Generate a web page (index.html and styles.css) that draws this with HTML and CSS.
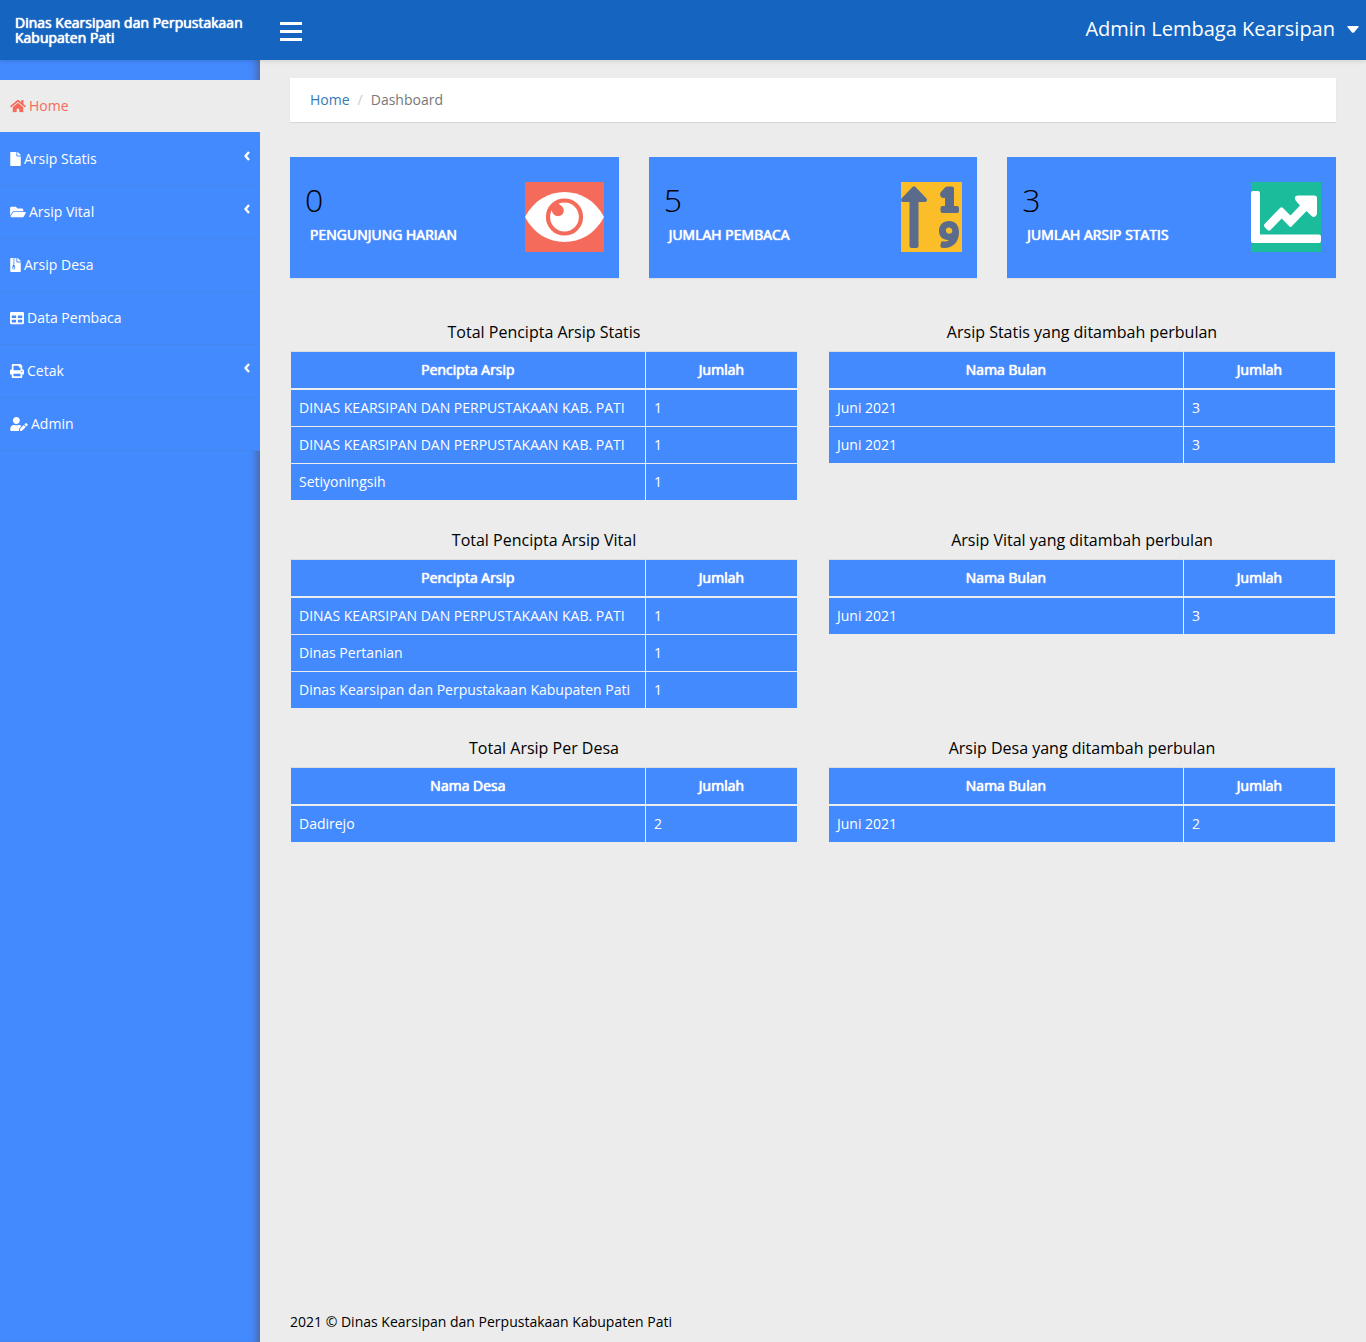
FILE: index.html
```html
<!DOCTYPE html>
<html lang="id">
<head>
<meta charset="utf-8">
<meta name="viewport" content="width=device-width, initial-scale=1">
<title>Dashboard - Dinas Kearsipan dan Perpustakaan Kabupaten Pati</title>
<link rel="stylesheet" href="styles.css">
</head>
<body>
<header class="topbar">
  <a class="brand heavy" href="#">Dinas Kearsipan dan Perpustakaan Kabupaten Pati</a>
  <button class="toggle" type="button" aria-label="Menu"><svg width="22" height="19" viewBox="0 0 22 19"><path d="M0 0h22v3H0zM0 8h22v3H0zM0 16h22v3H0z"/></svg></button>
  <button class="account" type="button">Admin Lembaga Kearsipan <svg width="12" height="7" viewBox="0 0 12 7"><path d="M1 0h10q1 0 .6 1L7 6.400Q6 7.300 5 6.400L.4 1Q0 0 1 0z"/></svg></button>
</header>
<div class="shell">
  <nav class="sidebar">
    <a class="item active" href="#"><svg width="16" height="14" viewBox="0 0 576 512"><path d="M280.37 148.26L96 300.11V464a16 16 0 0 0 16 16l112.06-.29a16 16 0 0 0 15.92-16V368a16 16 0 0 1 16-16h64a16 16 0 0 1 16 16v95.64a16 16 0 0 0 16 16.05L464 480a16 16 0 0 0 16-16V300L295.67 148.26a12.19 12.19 0 0 0-15.3 0zM571.6 251.47L488 182.56V44.05a12 12 0 0 0-12-12h-56a12 12 0 0 0-12 12v72.61L318.47 43a48 48 0 0 0-61 0L4.34 251.47a12 12 0 0 0-1.6 16.9l25.5 31A12 12 0 0 0 45.15 301l235.22-193.74a12.19 12.19 0 0 1 15.3 0L530.9 301a12 12 0 0 0 16.9-1.6l25.5-31a12 12 0 0 0-1.7-16.93z"/></svg>Home</a>
    <a class="item" href="#"><svg width="11" height="14" viewBox="0 0 384 512"><path d="M224 136V0H24C10.700 0 0 10.700 0 24v464c0 13.300 10.700 24 24 24h336c13.300 0 24-10.700 24-24V160H248c-13.200 0-24-10.800-24-24zm160-14.100v6.100H256V0h6.100c6.400 0 12.500 2.500 17 7l97.900 98c4.500 4.500 7 10.600 7 16.900z"/></svg>Arsip Statis<svg class="arrow" width="6" height="10" viewBox="0 0 6 10"><path d="M5 1L1.500 5L5 9"/></svg></a>
    <a class="item" href="#"><svg width="16" height="14" viewBox="0 0 576 512"><path d="M572.694 292.093L500.270 416.248A63.997 63.997 0 0 1 444.989 448H45.025c-18.523 0-30.064-20.093-20.731-36.093l72.424-124.155A64 64 0 0 1 152 256h399.964c18.523 0 30.064 20.093 20.730 36.093zM152 224h328v-48c0-26.510-21.490-48-48-48H272l-64-64H48C21.490 64 0 85.490 0 112v278.046l69.077-118.418C86.214 242.250 117.989 224 152 224z"/></svg>Arsip Vital<svg class="arrow" width="6" height="10" viewBox="0 0 6 10"><path d="M5 1L1.500 5L5 9"/></svg></a>
    <a class="item" href="#"><svg width="11" height="14" viewBox="0 0 384 512"><path d="M377 105L279.100 7c-4.500-4.500-10.600-7-17-7H256v128h128v-6.100c0-6.300-2.500-12.400-7-16.900zM128.400 336c-17.900 0-32.400 12.100-32.400 27 0 15 14.600 27 32.500 27s32.400-12.100 32.400-27-14.600-27-32.500-27zM224 136V0h-63.600v32h-32V0H24C10.700 0 0 10.700 0 24v464c0 13.300 10.700 24 24 24h336c13.300 0 24-10.700 24-24V160H248c-13.200 0-24-10.800-24-24zM95.900 32h32v32h-32V32zm32.300 384c-33.200 0-58-30.400-51.400-62.900L96.400 256v-32h32v-32h-32v-32h32v-32h-32V96h32V64h32v32h-32v32h32v32h-32v32h32v32h-32v32h22.100c5.700 0 10.700 4.100 11.800 9.700l17.300 87.700c6.400 32.400-18.400 62.600-51.400 62.600z"/></svg>Arsip Desa</a>
    <a class="item" href="#"><svg width="14" height="14" viewBox="0 0 512 512"><path d="M464 32H48C21.490 32 0 53.490 0 80v352c0 26.510 21.490 48 48 48h416c26.510 0 48-21.490 48-48V80c0-26.510-21.490-48-48-48zM224 416H64v-96h160v96zm0-160H64v-96h160v96zm224 160H288v-96h160v96zm0-160H288v-96h160v96z"/></svg>Data Pembaca</a>
    <a class="item" href="#"><svg width="14" height="14" viewBox="0 0 512 512"><path d="M448 192V77.250c0-8.490-3.370-16.620-9.370-22.630L393.370 9.370c-6-6-14.140-9.370-22.630-9.370H96C78.330 0 64 14.330 64 32v160c-35.350 0-64 28.650-64 64v112c0 8.840 7.160 16 16 16h48v96c0 17.670 14.330 32 32 32h320c17.670 0 32-14.330 32-32v-96h48c8.840 0 16-7.160 16-16V256c0-35.350-28.650-64-64-64zm-64 256H128v-96h256v96zm0-224H128V64h192v48c0 8.840 7.160 16 16 16h48v96zm48 72c-13.250 0-24-10.750-24-24 0-13.260 10.750-24 24-24s24 10.740 24 24c0 13.250-10.750 24-24 24z"/></svg>Cetak<svg class="arrow" width="6" height="10" viewBox="0 0 6 10"><path d="M5 1L1.500 5L5 9"/></svg></a>
    <a class="item" href="#"><svg width="18" height="14" viewBox="0 0 640 512"><path d="M224 256c70.700 0 128-57.300 128-128S294.700 0 224 0 96 57.300 96 128s57.300 128 128 128zm89.600 32h-16.700c-22.200 10.200-46.900 16-72.900 16s-50.600-5.800-72.900-16h-16.700C60.200 288 0 348.200 0 422.400V464c0 26.500 21.500 48 48 48h274.900c-2.400-6.800-3.400-14-2.600-21.300l6.800-60.900 1.200-11.100 7.900-7.900 77.300-77.300c-24.500-27.700-60-45.500-99.900-45.500zm45.300 145.300l-6.800 61c-1.100 10.200 7.500 18.800 17.600 17.600l60.900-6.800 137.900-137.900-71.700-71.700-137.900 137.800zM633 268.900L595.100 231c-9.300-9.300-24.500-9.300-33.800 0l-37.800 37.800-4.100 4.100 71.800 71.700 41.800-41.800c9.300-9.400 9.300-24.500 0-33.900z"/></svg>Admin</a>
  </nav>
  <main class="content">
    <ol class="crumbs"><li><a href="#">Home</a></li><li>Dashboard</li></ol>
    <section class="cards">
      <article class="card">
        <div><p class="figure">0</p><h2 class="label heavy">PENGUNJUNG HARIAN</h2></div>
        <svg width="79" height="70" viewBox="0 0 79 70"><path fill="#f56b5b" d="M0 0h79v70H0z"/><path fill="#fff" d="M0 35C9 18 24 10 39.500 10S70 18 79 35C70 52 55 60 39.500 60S9 52 0 35z"/><circle cx="39.500" cy="35" r="16.500" fill="none" stroke="#f56b5b" stroke-width="4.200"/><circle cx="33" cy="28.500" r="5.800" fill="#f56b5b"/><path fill="#f56b5b" d="M26 27L33 21L36 24L28 31z"/></svg>
      </article>
      <article class="card">
        <div><p class="figure">5</p><h2 class="label heavy">JUMLAH PEMBACA</h2></div>
        <svg width="61" height="70" viewBox="0 0 61 70"><path fill="#fbbe28" d="M0 0h61v70H0z"/><g fill="#5b6b8c"><path d="M8.500 20H2Q-1 19.500.5 16.500L11.500 5Q13 3.500 14.500 5L25.500 16.500Q27 19.500 24 20H17.500V64Q17.500 66 15.500 66H10.500Q8.500 66 8.500 64z"/><path d="M44 5.500Q45 4.500 46.500 4.500H51Q53 4.500 53 6.500V24H56Q58 24 58 26V29Q58 31 56 31H41.500Q39.500 31 39.500 29V26Q39.500 24 41.500 24H44V16H42Q40.500 16 39.500 14Q38.500 12 39.500 10.500z"/><path fill-rule="evenodd" d="M48 39C54.500 39 58 43.500 58 50C58 59 53 66 43 66Q40 66 39.300 64.500L40 60.500Q40.500 58.800 43 59.500Q46.500 59.500 48 58C42 58.500 38 54.500 38 49C38 43 42 39 48 39zM48 45.500C45.500 45.500 44.700 47 45 49C45.400 51 47 52 49 51.500C51.500 51 51.500 49 51 47.500Q50 45.500 48 45.500z"/></g></svg>
      </article>
      <article class="card">
        <div><p class="figure">3</p><h2 class="label heavy">JUMLAH ARSIP STATIS</h2></div>
        <svg width="70" height="70" viewBox="0 0 70 70"><path fill="#1abc9c" d="M0 0h70v70H0z"/><path fill="#fff" d="M2 9H7Q9 9 9 11V52.500H68Q70 52.500 70 54.500V59Q70 61 68 61H2Q0 61 0 59V11Q0 9 2 9z"/><path fill="#fff" d="M13.500 42L29 26Q30.500 24.500 32 26L39.500 33.500L49 23.500L45 19Q42 14 47 13.500H63.500Q66 13.500 66 16V32Q65 36 61 34.500L55.500 29L40.500 44.500Q39.500 45.500 38.500 44.500L30.700 36.500L19.500 48Q18 49 16.500 48L13.500 45Q12.500 43.500 13.500 42z"/></svg>
      </article>
    </section>
    <section class="reports">
      <table>
        <caption>Total Pencipta Arsip Statis</caption>
        <thead><tr><th class="heavy name">Pencipta Arsip</th><th class="heavy">Jumlah</th></tr></thead>
        <tbody><tr><td>DINAS KEARSIPAN DAN PERPUSTAKAAN KAB. PATI</td><td>1</td></tr><tr><td>DINAS KEARSIPAN DAN PERPUSTAKAAN KAB. PATI</td><td>1</td></tr><tr><td>Setiyoningsih</td><td>1</td></tr></tbody>
      </table>
      <table>
        <caption>Arsip Statis yang ditambah perbulan</caption>
        <thead><tr><th class="heavy name">Nama Bulan</th><th class="heavy">Jumlah</th></tr></thead>
        <tbody><tr><td>Juni 2021</td><td>3</td></tr><tr><td>Juni 2021</td><td>3</td></tr></tbody>
      </table>
      <table>
        <caption>Total Pencipta Arsip Vital</caption>
        <thead><tr><th class="heavy name">Pencipta Arsip</th><th class="heavy">Jumlah</th></tr></thead>
        <tbody><tr><td>DINAS KEARSIPAN DAN PERPUSTAKAAN KAB. PATI</td><td>1</td></tr><tr><td>Dinas Pertanian</td><td>1</td></tr><tr><td>Dinas Kearsipan dan Perpustakaan Kabupaten Pati</td><td>1</td></tr></tbody>
      </table>
      <table>
        <caption>Arsip Vital yang ditambah perbulan</caption>
        <thead><tr><th class="heavy name">Nama Bulan</th><th class="heavy">Jumlah</th></tr></thead>
        <tbody><tr><td>Juni 2021</td><td>3</td></tr></tbody>
      </table>
      <table>
        <caption>Total Arsip Per Desa</caption>
        <thead><tr><th class="heavy name">Nama Desa</th><th class="heavy">Jumlah</th></tr></thead>
        <tbody><tr><td>Dadirejo</td><td>2</td></tr></tbody>
      </table>
      <table>
        <caption>Arsip Desa yang ditambah perbulan</caption>
        <thead><tr><th class="heavy name">Nama Bulan</th><th class="heavy">Jumlah</th></tr></thead>
        <tbody><tr><td>Juni 2021</td><td>2</td></tr></tbody>
      </table>
    </section>
    <footer class="footer">2021 © Dinas Kearsipan dan Perpustakaan Kabupaten Pati</footer>
  </main>
</div>
</body>
</html>
```
FILE: styles.css
```css
* { box-sizing: border-box; }

body {
  display: flex;
  flex-direction: column;
  min-height: 100vh;
  margin: 0;
  background: #ececec;
  color: #000;
  font: 400 14px/20px "Open Sans", sans-serif;
}

a { color: inherit; text-decoration: none; }

button {
  border: 0;
  padding: 0;
  background: none;
  color: inherit;
  font: inherit;
  cursor: pointer;
}

/* Regular letterforms thickened without changing their widths */
.heavy {
  font-weight: 400;
  text-shadow: 0 0 1px currentColor, 0 0 1px currentColor;
}

.topbar {
  position: relative;
  display: flex;
  align-items: center;
  height: 60px;
  padding-right: 7px;
  background: #1565c0;
  color: #fff;
  box-shadow: 0 1px 5px rgba(0, 0, 0, 0.12);
}

.topbar svg { display: block; fill: #fff; }

.brand {
  width: 280px;
  padding: 0 32px 0 15px;
  line-height: 15px;
}

.toggle { padding-top: 3px; }

.account {
  display: flex;
  align-items: center;
  gap: 12px;
  margin-left: auto;
  padding-bottom: 2px;
  font-size: 20px;
}

.shell { display: flex; flex: 1; }

.sidebar {
  flex: none;
  width: 260px;
  padding-top: 20px;
  background: #448aff;
  box-shadow: inset -8px 0 6px -4px rgba(80, 90, 110, 0.6);
}

.item {
  display: flex;
  align-items: center;
  gap: 3px;
  height: 53px;
  padding: 0 10px;
  border-bottom: 1px solid #4585ee;
  background: #448aff;
  color: #fff;
}

.item svg { fill: currentColor; }

.item .arrow {
  margin: 0 0 6px auto;
  fill: none;
  stroke: currentColor;
  stroke-width: 2.400;
}

.active {
  border-color: #448aff;
  background: #ececec;
  background-clip: padding-box;
  color: #f56b5b;
}

.content {
  display: flex;
  flex: 1;
  flex-direction: column;
  min-width: 0;
  padding: 18px 30px 10px;
}

.crumbs {
  display: flex;
  margin: 0;
  padding: 12px 20px;
  background: #fff;
  box-shadow: 0 1px 1px rgba(0, 0, 0, 0.08);
  color: #777;
  list-style: none;
}

.crumbs a { color: #337ab7; }

.crumbs li + li::before {
  content: "/";
  padding: 0 8px;
  color: #ccc;
}

.cards {
  display: grid;
  grid-template-columns: repeat(3, 1fr);
  gap: 30px;
  margin-top: 35px;
}

.card {
  display: flex;
  justify-content: space-between;
  padding: 25px 15px 26px;
  background: #448aff;
  box-shadow: 0 1px 1px rgba(0, 0, 0, 0.06);
}

.figure {
  margin: 0;
  font-size: 32px;
  font-weight: 300;
  line-height: 36px;
}

.label {
  margin: 7px 0 0 5px;
  color: #fff;
  font-size: 14px;
}

.reports {
  display: grid;
  grid-template-columns: repeat(2, 1fr);
  gap: 20px 30px;
  align-items: start;
  margin-top: 35px;
}

table {
  width: 100%;
  border-collapse: collapse;
  table-layout: fixed;
}

caption {
  padding: 9px 0;
  font-size: 16px;
}

th, td {
  height: 37px;
  padding: 8px;
  border: 1px solid #ececec;
  background: #448aff;
  background-clip: padding-box;
  color: #fff;
  text-align: left;
}

th {
  border-top-color: #ddd;
  border-bottom-width: 2px;
  text-align: center;
}

.name { width: 70%; }

.footer { margin-top: auto; }
```
